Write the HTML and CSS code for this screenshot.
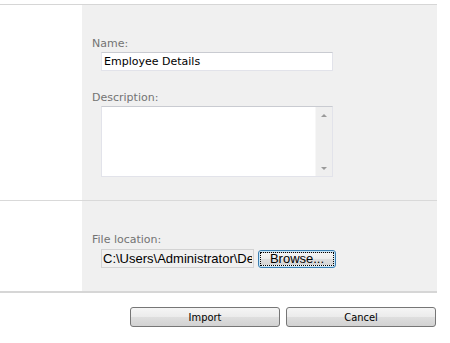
FILE: index.html
```html
<!DOCTYPE html>
<html>
<head>
    <title>Import Package</title>
    <link rel="stylesheet" href="styles.css">
</head>
<body>
    <div class="dialog">
        <div class="row row-general">
            <div class="side"></div>
            <div class="panel">
                <label class="field-label" for="name">Name:</label>
                <input class="text-input" id="name" type="text" value="Employee Details">
                <label class="field-label label-desc" for="desc">Description:</label>
                <div class="memo">
                    <textarea class="memo-text" id="desc"></textarea>
                    <div class="memo-scroll">
                        <span class="arrow-up"></span>
                        <span class="arrow-down"></span>
                    </div>
                </div>
            </div>
        </div>

        <div class="row row-file">
            <div class="side"></div>
            <div class="panel">
                <label class="field-label label-file" for="path">File location:</label>
                <div class="file-line">
                    <input class="path-input" id="path" type="text" value="C:\Users\Administrator\Desktop\Employee Details.zip" readonly>
                    <button class="browse-btn"><span class="focus-ring">Browse...</span></button>
                </div>
            </div>
        </div>

        <div class="actions">
            <button class="action-btn">Import</button>
            <button class="action-btn">Cancel</button>
        </div>
    </div>
</body>
</html>
```

FILE: styles.css
```css
body {
    margin: 0;
    background: #ffffff;
    font-family: "DejaVu Sans", Verdana, sans-serif;
    font-size: 11px;
}
.dialog {
    width: 437px;
    margin-top: 4px;
    border-top: 1px solid #d6d6d6;
}
.row {
    display: flex;
}
.row-general {
    height: 195px;
    border-bottom: 1px solid #d9d9d9;
}
.row-file {
    height: 90px;
    border-bottom: 2px solid #d6d6d6;
}
.side {
    width: 82px;
    background: #ffffff;
}
.panel {
    flex: 1;
    background: #f0f0f0;
    padding: 32px 0 0 10px;
}
.field-label {
    display: block;
    color: #737373;
    line-height: 14px;
    margin-bottom: 1px;
}
.label-desc {
    margin-top: 20px;
}
.label-file {
    margin-bottom: 2px;
}
.text-input {
    display: block;
    box-sizing: border-box;
    width: 232px;
    height: 19px;
    margin: 0 0 0 9px;
    padding: 0 2px;
    border: 1px solid #e2e3ea;
    border-top-color: #c9cbd1;
    background: #ffffff;
    font-family: "DejaVu Sans", Verdana, sans-serif;
    font-size: 11px;
    color: #000000;
    outline: none;
}
.memo {
    display: flex;
    box-sizing: border-box;
    width: 232px;
    height: 71px;
    margin-left: 9px;
    border: 1px solid #e2e3ea;
    border-top-color: #c9cbd1;
    background: #ffffff;
}
.memo-text {
    flex: 1;
    border: none;
    resize: none;
    outline: none;
    overflow: hidden;
    padding: 2px;
    background: #ffffff;
}
.memo-scroll {
    width: 16px;
    background: #efefef;
    border-left: 1px solid #f7f7f7;
    display: flex;
    flex-direction: column;
    justify-content: space-between;
    align-items: center;
    padding: 7px 0 6px;
}
.arrow-up {
    width: 0;
    height: 0;
    border-left: 3px solid transparent;
    border-right: 3px solid transparent;
    border-bottom: 3px solid #9a9a9a;
}
.arrow-down {
    width: 0;
    height: 0;
    border-left: 3px solid transparent;
    border-right: 3px solid transparent;
    border-top: 3px solid #9a9a9a;
}
.file-line {
    display: flex;
    align-items: center;
    gap: 4px;
    margin-left: 9px;
}
.path-input {
    box-sizing: border-box;
    width: 153px;
    height: 19px;
    margin: 0;
    padding: 0 1px;
    border: 1px solid #d3d3d3;
    background: #f0f0f0;
    font-family: "Liberation Sans", Arial, sans-serif;
    font-size: 13px;
    color: #000000;
    outline: none;
}
.browse-btn {
    box-sizing: border-box;
    width: 78px;
    height: 18px;
    padding: 1px;
    border: 1px solid #3c7fb1;
    border-radius: 3px;
    background: linear-gradient(#eaf6fd 0%, #d9f0fc 50%, #bee6fd 51%, #a7d9f5 100%);
    box-shadow: inset 0 0 0 1px #c8e6f8;
    font-family: "Liberation Sans", Arial, sans-serif;
    font-size: 13px;
    color: #000000;
    display: flex;
}
.focus-ring {
    flex: 1;
    border: 1px dotted #000000;
    line-height: 12px;
    text-align: center;
    background: linear-gradient(#f4f4f4 0%, #ebebeb 50%, #dddddd 51%, #d6d6d6 100%);
}
.actions {
    display: flex;
    justify-content: flex-end;
    gap: 6px;
    padding: 14px 1px 0 0;
}
.action-btn {
    box-sizing: border-box;
    width: 150px;
    height: 20px;
    padding: 0;
    border: 1px solid #767676;
    border-radius: 3px;
    background: linear-gradient(#f5f5f5 0%, #ebebeb 50%, #dedede 51%, #d2d2d2 100%);
    font-family: "DejaVu Sans Condensed", "DejaVu Sans", sans-serif;
    font-size: 11px;
    color: #000000;
}
```
